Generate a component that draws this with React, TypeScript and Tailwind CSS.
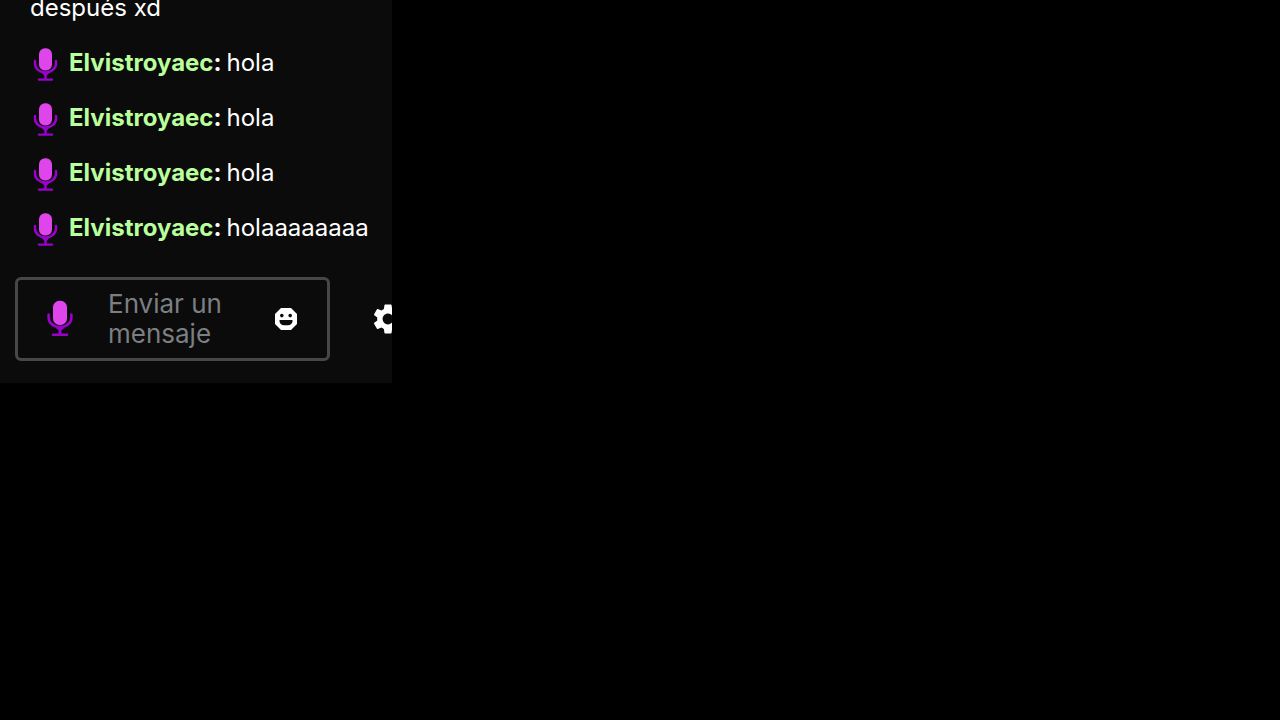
import React from "react";
import { MdSettings } from "react-icons/md";

type Message = { user: string; text: string };

const messages: Message[] = [
  { user: "Elvistroyaec", text: "hola" },
  { user: "Elvistroyaec", text: "hola" },
  { user: "Elvistroyaec", text: "hola" },
  { user: "Elvistroyaec", text: "holaaaaaaaa" },
];

function HostBadge({ className }: { className: string }) {
  return (
    <svg viewBox="0 0 24 34" className={className} fill="none" aria-hidden="true">
      <path
        d="M1.5 13v2.5c0 5 4.5 9 10.500 9s10.500-4 10.500-9V13M12 25v6.500M5.500 31.600h13"
        stroke="#9b00cf"
        strokeWidth="2.4"
        strokeLinecap="round"
      />
      <path d="M12 24v3.500M9 25.500l3 2.500 3-2.500z" stroke="#9b00cf" strokeWidth="1" fill="#9b00cf" />
      <rect x="5.500" y="0.200" width="13" height="22.300" rx="6" fill="#de45ea" />
    </svg>
  );
}

function SmileIcon() {
  return (
    <svg viewBox="0 0 22 22" className="size-[22px]" aria-hidden="true">
      <path
        d="M6 0h10l1.500 1.500 3 3L22 6v10l-1.500 1.500-3 3L16 22H6l-1.500-1.500-3-3L0 16V6l1.500-1.500 3-3z"
        fill="#fff"
      />
      <circle cx="6.800" cy="7.600" r="1.800" fill="#0b0b0b" />
      <circle cx="15.200" cy="7.600" r="1.800" fill="#0b0b0b" />
      <path d="M4.500 12h13v1c0 2.500-2 4.200-4.500 4.200H9c-2.500 0-4.500-1.700-4.500-4.200z" fill="#0b0b0b" />
    </svg>
  );
}

export default function App() {
  return (
    <div className="min-h-screen bg-black font-['Inter',sans-serif] text-white">
      <main className="w-[392px] overflow-hidden bg-[#0b0b0b] pb-[22px]">
        <ul className="flex h-[251px] flex-col justify-end gap-[25px] overflow-hidden pb-2 pl-[30px] text-2xl leading-[30px] whitespace-nowrap">
          <li>después xd</li>
          {messages.map((message, index) => (
            <li key={index} className="flex h-[30px] items-start">
              <HostBadge className="mr-2 h-[34px] w-[31px] shrink-0" />
              <span className="font-bold text-[#b9ff9c]">{message.user}</span>
              <span className="mr-[5px] font-bold">:</span>
              <span>{message.text}</span>
            </li>
          ))}
        </ul>
        <form className="mt-[26px] ml-[15px] flex items-center gap-[40px]" onSubmit={(e) => e.preventDefault()}>
          <div className="flex h-[84px] w-[315px] shrink-0 items-center rounded-md border-[3px] border-[#474747] pr-[30px] pl-[29px]">
            <HostBadge className="h-[38px] w-[26px] shrink-0" />
            <textarea
              aria-label="Enviar un mensaje"
              placeholder="Enviar un mensaje"
              rows={2}
              className="ml-[35px] block h-[60px] w-[130px] resize-none overflow-hidden bg-transparent p-0 text-[26px] leading-[30px] text-white outline-none placeholder:text-[#7b7f82]"
            />
            <button type="button" aria-label="Emojis" className="ml-auto shrink-0">
              <SmileIcon />
            </button>
          </div>
          <button type="button" aria-label="Ajustes" className="shrink-0">
            <MdSettings className="size-9" />
          </button>
        </form>
      </main>
    </div>
  );
}
